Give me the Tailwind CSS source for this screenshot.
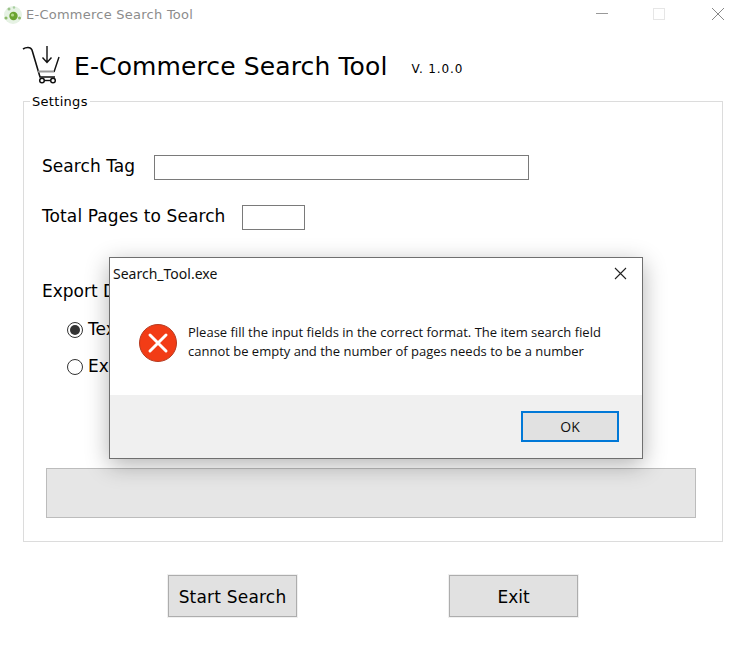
<!DOCTYPE html>
<html lang="en">
  <head>
    <meta charset="UTF-8" />
    <meta name="viewport" content="width=device-width, initial-scale=1.0" />
    <title>E-Commerce Search Tool</title>
    <script src="https://cdn.jsdelivr.net/npm/@tailwindcss/browser@4"></script>
  </head>
  <body class="bg-white">
    <div class="relative w-[747px] h-[653px] overflow-hidden font-['DejaVu_Sans',Verdana,sans-serif] text-black">
      <!-- Title bar -->
      <div class="flex items-center h-[30px] pl-[2px]">
        <svg width="22" height="22" viewBox="0 0 22 22" class="mr-[2px]">
          <circle cx="11" cy="11" r="9" fill="#e6f2e4" />
          <circle cx="11.5" cy="12" r="4.2" fill="#6aa32f" />
          <circle cx="10.5" cy="11" r="1.6" fill="#b5d98a" />
          <circle cx="4" cy="14" r="1.6" fill="#8dbb6c" />
          <circle cx="7" cy="5" r="1.5" fill="#9cc48a" />
          <circle cx="17.5" cy="14" r="1.5" fill="#8dbb6c" />
          <circle cx="12" cy="3.5" r="1.2" fill="#a9cfa0" />
        </svg>
        <span class="text-[13px] text-[#8c8c8c] tracking-[0.25px]">E-Commerce Search Tool</span>
        <div class="ml-auto flex items-center mt-[-2px]">
          <svg width="14" height="14" viewBox="0 0 14 14" class="mr-[43px]"><path d="M1 6.5H13" stroke="#999" stroke-width="1" /></svg>
          <svg width="14" height="14" viewBox="0 0 14 14" class="mr-[45px]"><rect x="1.5" y="1.5" width="11" height="11" fill="none" stroke="#e6e6e6" /></svg>
          <svg width="14" height="14" viewBox="0 0 14 14" class="mr-[22px]"><path d="M1 1L13 13M13 1L1 13" stroke="#888" stroke-width="1" /></svg>
        </div>
      </div>

      <!-- Header -->
      <div class="flex items-center h-[71px] pl-[22px]">
        <svg width="40" height="42" viewBox="0 0 40 42" fill="none" stroke="#111" class="mt-[-1px]">
          <path d="M1 5C4 3 8.5 2.5 10 6L18 33H33" stroke-width="1.6" />
          <path d="M37 13L32 28" stroke-width="1.4" />
          <path d="M25 2V18M20.5 13.5L25 18.5L29.5 13.5" stroke-width="1.4" />
          <path d="M16 27.5H32" stroke="#999" stroke-width="2" />
          <circle cx="20" cy="36.5" r="2.3" stroke-width="1.5" />
          <circle cx="31" cy="36.5" r="2.3" stroke-width="1.5" />
          <path d="M22.5 36.5H28.5" stroke-width="1.4" />
        </svg>
        <h1 class="ml-[12px] text-[25px] font-normal leading-none tracking-[0.12px] mt-[1px]">E-Commerce Search Tool</h1>
        <span class="ml-[24px] mt-[7px] text-[12px] tracking-[0.85px]">V. 1.0.0</span>
      </div>

      <!-- Settings group -->
      <div class="relative ml-[23px] w-[700px] h-[441px] border border-[#dcdcdc] px-[18px]">
        <span class="absolute left-[6px] top-[-8px] bg-white px-[2px] text-[13px] leading-[16px] tracking-[0.3px]">Settings</span>
        <div class="flex items-center h-[26px] mt-[52px]">
          <label class="text-[17px] w-[112px] tracking-[0.05px]">Search Tag</label>
          <input type="text" class="w-[375px] h-[25px] border border-[#7a7a7a] bg-white" />
        </div>
        <div class="flex items-center h-[26px] mt-[24px]">
          <label class="text-[17px] w-[200px] tracking-[0.1px]">Total Pages to Search</label>
          <input type="text" class="w-[63px] h-[25px] border border-[#7a7a7a] bg-white" />
        </div>
        <div class="text-[17px] leading-[20px] mt-[51px]">Export Data To</div>
        <div class="flex items-center h-[20px] mt-[19px] pl-[25px] gap-[5px]">
          <span class="flex items-center justify-center w-[16px] h-[16px] rounded-full border border-[#333]">
            <span class="w-[10px] h-[10px] rounded-full bg-[#333]"></span>
          </span>
          <span class="text-[17px]">Text File</span>
        </div>
        <div class="flex items-center h-[20px] mt-[17px] pl-[25px] gap-[5px]">
          <span class="w-[16px] h-[16px] rounded-full border border-[#333]"></span>
          <span class="text-[17px]">Excel File</span>
        </div>
        <div class="h-[50px] w-[650px] ml-[4px] mt-[91px] bg-[#e6e6e6] border border-[#bcbcbc]"></div>
      </div>

      <!-- Bottom buttons -->
      <div class="flex mt-[33px] pl-[168px] gap-[152px]">
        <button class="w-[129px] h-[42px] bg-[#e1e1e1] border border-[#adadad] shadow-[0_0_0_1px_#f0f0f0] text-[17px] tracking-[0.2px] pt-[3px]">Start Search</button>
        <button class="w-[129px] h-[42px] bg-[#e1e1e1] border border-[#adadad] shadow-[0_0_0_1px_#f0f0f0] text-[17px] pt-[3px]">Exit</button>
      </div>

      <!-- Error dialog -->
      <div class="absolute left-[109px] top-[257px] w-[534px] h-[202px] flex flex-col bg-white border border-[#6f6f6f] shadow-[0_6px_22px_rgba(0,0,0,0.3)] font-['Open_Sans','Noto_Sans',sans-serif]">
        <div class="flex items-center justify-between h-[31px] pl-[3px] pr-[15px]">
          <span class="text-[14px] text-[#111] font-['Noto_Sans',sans-serif]">Search_Tool.exe</span>
          <svg width="13" height="13" viewBox="0 0 13 13"><path d="M1 1L12 12M12 1L1 12" stroke="#222" stroke-width="1.1" /></svg>
        </div>
        <div class="flex items-start h-[106px] pl-[29px] pt-[34px]">
          <svg width="38" height="38" viewBox="0 0 38 38" class="shrink-0 mt-[1px]">
            <circle cx="19" cy="19" r="18.5" fill="#f23c16" stroke="#b53a20" stroke-width="1" />
            <path d="M11 11L27 27M27 11L11 27" stroke="#fff" stroke-width="3" stroke-linecap="round" />
          </svg>
          <p class="ml-[11px] text-[13px] leading-[19px] text-[#111] whitespace-nowrap">Please fill the input fields in the correct format. The item search field<br />cannot be empty and the number of pages needs to be a number</p>
        </div>
        <div class="flex-1 bg-[#f0f0f0] flex justify-end items-start pr-[23px] pt-[16px]">
          <button class="w-[98px] h-[31px] bg-[#e1e1e1] border-2 border-[#0078d7] text-[14px] text-[#111]">OK</button>
        </div>
      </div>
    </div>
  </body>
</html>
